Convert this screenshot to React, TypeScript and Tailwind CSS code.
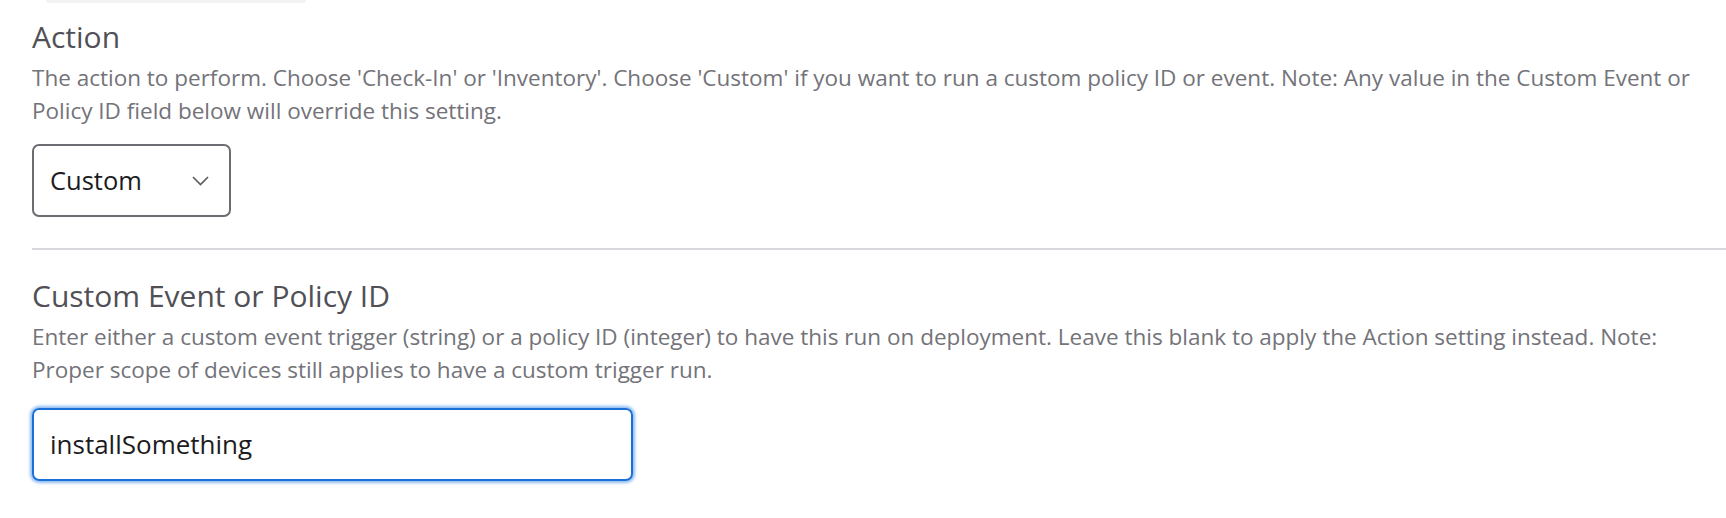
const font = { fontFamily: '"Open Sans", Lato, sans-serif' }

function FieldHeader({ title, children }: { title: string; children: React.ReactNode }) {
  return (
    <div>
      <h2 className="text-[30px] leading-[36px] text-[#505056]">{title}</h2>
      <p className="mt-[6px] text-[22.5px] leading-[33px] text-[#737379]">{children}</p>
    </div>
  )
}

export default function App() {
  return (
    <div className="min-h-[518px] w-full bg-white" style={font}>
      {/* bottom edge of the card above */}
      <div className="ml-[46px] h-[3px] w-[260px] rounded-b-md bg-[#f2f2f3]" />

      <div className="pl-[32px] pr-[24px] pt-[16px]">
        <FieldHeader title="Action">
          The action to perform. Choose 'Check-In' or 'Inventory'. Choose 'Custom' if you want to run a custom
          policy ID or event. Note: Any value in the Custom Event or Policy ID field below will override this
          setting.
        </FieldHeader>

        <div className="mt-[17px] flex h-[73px] w-[199px] items-center justify-between rounded-[7px] border-2 border-[#6c6c72] pl-[16px] pr-[20px]">
          <span className="text-[25.5px] text-[#1c1c1e]">Custom</span>
          <svg width="17" height="10" viewBox="0 0 17 10" fill="none" className="text-[#5b5b60]">
            <path d="M1 1l7.5 7.5L16 1" stroke="currentColor" strokeWidth="1.6" />
          </svg>
        </div>
      </div>

      <div className="ml-[32px] mt-[31px] h-[2px] bg-[#d9d9dd]" />

      <div className="pl-[32px] pr-[24px] pt-[28px]">
        <FieldHeader title="Custom Event or Policy ID">
          Enter either a custom event trigger (string) or a policy ID (integer) to have this run on deployment.
          Leave this blank to apply the Action setting instead. Note: Proper scope of devices still applies to have
          a custom trigger run.
        </FieldHeader>

        <div className="mt-[22px] flex h-[73px] w-[601px] items-center rounded-[7px] border-2 border-[#1b6fd9] pl-[16px] shadow-[0_0_3px_2px_#8fbcf2]">
          <span className="text-[26px] text-[#1c1c1e]">installSomething</span>
        </div>
      </div>
    </div>
  )
}
